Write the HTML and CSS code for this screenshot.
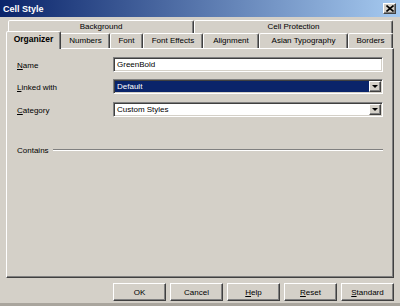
FILE: index.html
```html
<!DOCTYPE html>
<html lang="en">
<head>
    <meta charset="UTF-8">
    <title>Cell Style</title>
    <link rel="stylesheet" href="styles.css">
</head>
<body>
    <div class="window">
        <div class="titlebar">
            <span>Cell Style</span>
            <span class="close">
                <svg width="8" height="7" viewBox="0 0 8 7">
                    <path d="M0.5 0.5 L7.5 6.5 M7.5 0.5 L0.5 6.5" stroke="#000" stroke-width="1.6"/>
                </svg>
            </span>
        </div>

        <div class="content">
            <div class="tabrow back">
                <div class="tab w-background">Background</div>
                <div class="tab w-protection">Cell Protection</div>
            </div>
            <div class="tabrow front">
                <div class="tab w-organizer selected">Organizer</div>
                <div class="tab w-numbers">Numbers</div>
                <div class="tab w-font">Font</div>
                <div class="tab w-effects">Font Effects</div>
                <div class="tab w-alignment">Alignment</div>
                <div class="tab w-asian">Asian Typography</div>
                <div class="tab w-borders">Borders</div>
            </div>

            <div class="panel">
                <div class="field">
                    <label><u>N</u>ame</label>
                    <div class="input">GreenBold</div>
                </div>
                <div class="field">
                    <label><u>L</u>inked with</label>
                    <div class="input select focused">
                        <span class="value">Default</span>
                        <span class="arrow"><span class="tri"></span></span>
                    </div>
                </div>
                <div class="field third">
                    <label><u>C</u>ategory</label>
                    <div class="input select">
                        <span class="value">Custom Styles</span>
                        <span class="arrow"><span class="tri"></span></span>
                    </div>
                </div>
                <div class="contains">
                    <span>Contains</span>
                    <div class="rule"></div>
                </div>
            </div>

            <div class="buttons">
                <button>OK</button>
                <button>Cancel</button>
                <button><u>H</u>elp</button>
                <button><u>R</u>eset</button>
                <button><u>S</u>tandard</button>
            </div>
        </div>
    </div>
</body>
</html>
```

FILE: styles.css
```css
body {
    margin: 0;
    background-color: #d4d0c8;
    font-family: "Liberation Sans", Arial, sans-serif;
    font-size: 8px;
    color: #000;
}

.window {
    width: 400px;
    height: 306px;
    box-sizing: border-box;
    border-bottom: 3px solid #a9a59d;
    overflow: hidden;
}

.titlebar {
    height: 17px;
    padding: 0 4px 0 3px;
    display: flex;
    align-items: center;
    justify-content: space-between;
    background: linear-gradient(to right, #0a246a, #a6caf0);
    color: #fff;
    font-weight: bold;
    font-size: 9px;
}

.close {
    width: 13px;
    height: 11px;
    box-sizing: border-box;
    display: flex;
    align-items: center;
    justify-content: center;
    background-color: #d4d0c8;
    border: 1px solid;
    border-color: #fff #404040 #404040 #fff;
    box-shadow: inset -1px -1px #808080;
}

.content {
    padding: 3px 6px 0 6px;
}

.tabrow {
    display: flex;
    align-items: flex-start;
    padding-left: 2px;
}

.tabrow.back {
    height: 12px;
}

.tabrow.front {
    height: 16px;
}

.tab {
    box-sizing: border-box;
    height: 13px;
    line-height: 12px;
    text-align: center;
    background-color: #d4d0c8;
    border: 1px solid;
    border-bottom: none;
    border-color: #fff #404040 transparent #fff;
    border-radius: 2px 2px 0 0;
    box-shadow: inset -1px 0 #808080;
    white-space: nowrap;
}

.front .tab {
    height: 15px;
    margin-top: 1px;
    line-height: 13px;
}

.front .tab.selected {
    position: relative;
    z-index: 1;
    height: 18px;
    margin: -1px -2px 0 -2px;
    font-weight: bold;
    font-size: 8.5px;
    line-height: 15px;
}

.w-background { width: 186px; }
.w-protection { width: 199px; }
.w-organizer { width: 51px; }
.front .w-organizer.selected { width: 55px; }
.w-numbers { width: 51px; padding-left: 2px; }
.w-font { width: 33px; }
.w-effects { width: 60px; }
.w-alignment { width: 56px; }
.w-asian { width: 89px; }
.w-borders { width: 45px; }

.panel {
    height: 230px;
    box-sizing: border-box;
    padding: 8px 10px 0 10px;
    border: 1px solid;
    border-color: #fff #404040 #404040 #fff;
    box-shadow: inset -1px -1px #808080;
    display: flex;
    flex-direction: column;
    gap: 7px;
}

.field {
    display: flex;
    align-items: center;
    height: 15px;
}

.field.third {
    margin-top: 1px;
}

.field label {
    width: 96px;
    padding-top: 1px;
}

.input {
    flex: 1;
    height: 15px;
    box-sizing: border-box;
    display: flex;
    align-items: center;
    padding-left: 3px;
    background-color: #fff;
    border: 1px solid;
    border-color: #808080 #fff #fff #808080;
    box-shadow: inset 1px 1px #404040, inset -1px -1px #d4d0c8;
}

.select {
    padding: 1px;
}

.select .value {
    flex: 1;
    height: 11px;
    line-height: 11px;
    padding-left: 2px;
}

.select.focused .value {
    background-color: #0a246a;
    color: #fff;
}

.arrow {
    width: 12px;
    height: 11px;
    box-sizing: border-box;
    display: flex;
    align-items: center;
    justify-content: center;
    background-color: #d4d0c8;
    border: 1px solid;
    border-color: #fff #404040 #404040 #fff;
    box-shadow: inset -1px -1px #808080;
}

.tri {
    width: 0;
    height: 0;
    border-left: 3px solid transparent;
    border-right: 3px solid transparent;
    border-top: 3px solid #000;
}

.contains {
    display: flex;
    align-items: center;
    height: 10px;
    margin-top: 21px;
}

.rule {
    flex: 1;
    margin-left: 4px;
    border-top: 1px solid #808080;
    border-bottom: 1px solid #fff;
}

.buttons {
    display: flex;
    justify-content: flex-end;
    gap: 4px;
    margin-top: 5px;
}

button {
    width: 53px;
    height: 18px;
    padding: 0;
    font-family: "Liberation Sans", Arial, sans-serif;
    font-size: 8px;
    color: #000;
    background-color: #d4d0c8;
    border: 1px solid;
    border-color: #fff #404040 #404040 #fff;
    box-shadow: inset -1px -1px #808080;
}
```
